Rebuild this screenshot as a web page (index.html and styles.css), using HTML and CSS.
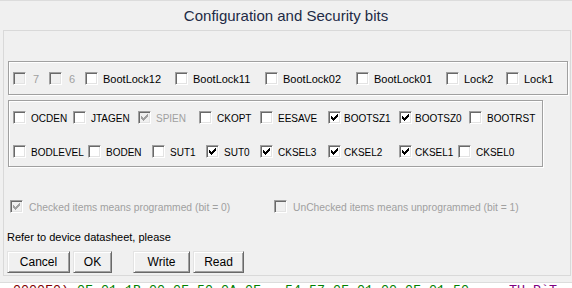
FILE: index.html
```html
<!DOCTYPE html>
<html lang="en">
<head>
    <meta charset="UTF-8">
    <meta name="viewport" content="width=device-width, initial-scale=1.0">
    <title>Configuration and Security bits</title>
    <link rel="stylesheet" href="styles.css">
</head>
<body>
    <div class="dialog">
        <h1 class="caption">Configuration and Security bits</h1>
        <div class="panel">
            <!-- Lock bits -->
            <div class="group group-lock">
                <div class="row row-lock">
                    <label class="bit off num"><span class="cb"></span><span class="name">7</span></label>
                    <label class="bit off num"><span class="cb"></span><span class="name">6</span></label>
                    <label class="bit"><span class="cb"></span><span class="name">BootLock12</span></label>
                    <label class="bit"><span class="cb"></span><span class="name">BootLock11</span></label>
                    <label class="bit"><span class="cb"></span><span class="name">BootLock02</span></label>
                    <label class="bit"><span class="cb"></span><span class="name">BootLock01</span></label>
                    <label class="bit"><span class="cb"></span><span class="name">Lock2</span></label>
                    <label class="bit"><span class="cb"></span><span class="name">Lock1</span></label>
                </div>
            </div>

            <!-- Fuse bits -->
            <div class="group group-fuse">
                <div class="row row-high">
                    <label class="bit"><span class="cb"></span><span class="name">OCDEN</span></label>
                    <label class="bit"><span class="cb"></span><span class="name">JTAGEN</span></label>
                    <label class="bit off"><span class="cb"><svg width="11" height="11" viewBox="0 0 11 11"><path d="M2 4h1v1h1v1h1v-1h1v-1h1v-1h1v-1h1v3h-1v1h-1v1h-1v1h-1v1h-1v-1h-1v-1h-1z"/></svg></span><span class="name">SPIEN</span></label>
                    <label class="bit"><span class="cb"></span><span class="name">CKOPT</span></label>
                    <label class="bit"><span class="cb"></span><span class="name">EESAVE</span></label>
                    <label class="bit tight"><span class="cb"><svg width="11" height="11" viewBox="0 0 11 11"><path d="M2 4h1v1h1v1h1v-1h1v-1h1v-1h1v-1h1v3h-1v1h-1v1h-1v1h-1v1h-1v-1h-1v-1h-1z"/></svg></span><span class="name">BOOTSZ1</span></label>
                    <label class="bit tight"><span class="cb"><svg width="11" height="11" viewBox="0 0 11 11"><path d="M2 4h1v1h1v1h1v-1h1v-1h1v-1h1v-1h1v3h-1v1h-1v1h-1v1h-1v1h-1v-1h-1v-1h-1z"/></svg></span><span class="name">BOOTSZ0</span></label>
                    <label class="bit"><span class="cb"></span><span class="name">BOOTRST</span></label>
                </div>
                <div class="row row-low">
                    <label class="bit"><span class="cb"></span><span class="name">BODLEVEL</span></label>
                    <label class="bit"><span class="cb"></span><span class="name">BODEN</span></label>
                    <label class="bit"><span class="cb"></span><span class="name">SUT1</span></label>
                    <label class="bit"><span class="cb"><svg width="11" height="11" viewBox="0 0 11 11"><path d="M2 4h1v1h1v1h1v-1h1v-1h1v-1h1v-1h1v3h-1v1h-1v1h-1v1h-1v1h-1v-1h-1v-1h-1z"/></svg></span><span class="name">SUT0</span></label>
                    <label class="bit"><span class="cb"><svg width="11" height="11" viewBox="0 0 11 11"><path d="M2 4h1v1h1v1h1v-1h1v-1h1v-1h1v-1h1v3h-1v1h-1v1h-1v1h-1v1h-1v-1h-1v-1h-1z"/></svg></span><span class="name">CKSEL3</span></label>
                    <label class="bit tight"><span class="cb"><svg width="11" height="11" viewBox="0 0 11 11"><path d="M2 4h1v1h1v1h1v-1h1v-1h1v-1h1v-1h1v3h-1v1h-1v1h-1v1h-1v1h-1v-1h-1v-1h-1z"/></svg></span><span class="name">CKSEL2</span></label>
                    <label class="bit tight"><span class="cb"><svg width="11" height="11" viewBox="0 0 11 11"><path d="M2 4h1v1h1v1h1v-1h1v-1h1v-1h1v-1h1v3h-1v1h-1v1h-1v1h-1v1h-1v-1h-1v-1h-1z"/></svg></span><span class="name">CKSEL1</span></label>
                    <label class="bit"><span class="cb"></span><span class="name">CKSEL0</span></label>
                </div>
            </div>

            <div class="legend">
                <label class="bit off wide"><span class="cb"><svg width="11" height="11" viewBox="0 0 11 11"><path d="M2 4h1v1h1v1h1v-1h1v-1h1v-1h1v-1h1v3h-1v1h-1v1h-1v1h-1v1h-1v-1h-1v-1h-1z"/></svg></span><span class="name">Checked items means programmed (bit = 0)</span></label>
                <label class="bit off wide"><span class="cb"></span><span class="name">UnChecked items means unprogrammed (bit = 1)</span></label>
            </div>

            <p class="note">Refer to device datasheet, please</p>

            <div class="buttons">
                <button class="btn btn-cancel">Cancel</button>
                <button class="btn btn-ok">OK</button>
                <button class="btn btn-write">Write</button>
                <button class="btn btn-read">Read</button>
            </div>
        </div>
        <div class="hexdump"><span class="addr">0000F0)</span> <span class="hex">0F 01 1B 00 0F 50 0A 0F   54 57 0F 01 00 0F 01 50</span>     <span class="ascii">TU.P`T~~</span></div>
    </div>
</body>
</html>
```

FILE: styles.css
```css
* {
    box-sizing: border-box;
}
body {
    margin: 0;
    width: 572px;
    height: 288px;
    overflow: hidden;
    background-color: #f0f0f0;
    font-family: "Liberation Sans", Arial, sans-serif;
    font-size: 11px;
    color: #000;
}
.dialog {
    border-top: 1px solid #dcdcdc;
}
.caption {
    margin: 0;
    height: 29px;
    line-height: 29px;
    text-align: center;
    font-size: 15px;
    font-weight: normal;
    color: #222a45;
}
.panel {
    margin-left: 3px;
    width: 568px;
    height: 246px;
    border: 1px solid #d9d9d9;
    padding: 30px 0 0 3px;
}

/* etched group boxes */
.group {
    margin-left: 1px;
    padding-left: 4px;
    border: 1px solid #a0a0a0;
    box-shadow: inset 1px 1px 0 #fff, 1px 1px 0 #fff;
}
.group-lock {
    width: 560px;
    height: 34px;
    padding-top: 10px;
}
.group-fuse {
    width: 535px;
    height: 67px;
    margin-top: 5px;
    padding-top: 10px;
    display: grid;
    align-content: start;
    row-gap: 20px;
}
.row {
    display: grid;
}
.row-lock {
    grid-template-columns: 36px 36px 90px 90px 91px 90px 60px auto;
}
.row-high {
    grid-template-columns: 60px 65px 61px 61px 68px 71px 70px auto;
    font-size: 10px;
}
.row-low {
    grid-template-columns: 75px 64px 54px 54px 68px 71px 59px auto;
    font-size: 10px;
}

/* check boxes */
.bit {
    display: flex;
    align-items: flex-start;
    gap: 5px;
    white-space: nowrap;
    line-height: 13px;
}
.bit.num {
    gap: 7px;
}
.bit.tight {
    gap: 3px;
}
.bit.wide {
    gap: 6px;
}
.bit .name {
    padding-top: 1px;
}
.bit.off {
    color: #a0a0a0;
}
.cb {
    flex: none;
    width: 13px;
    height: 13px;
    background-color: #fff;
    border: 1px solid;
    border-color: #a0a0a0 #fff #fff #a0a0a0;
    box-shadow: inset 1px 1px 0 #696969, inset -1px -1px 0 #e3e3e3;
}
.cb svg {
    display: block;
    fill: #000;
}
.bit.off .cb {
    background-color: #f0f0f0;
}
.bit.off .cb svg {
    fill: #a0a0a0;
}

.legend {
    display: grid;
    grid-template-columns: 264px auto;
    margin-top: 33px;
    padding-left: 3px;
    font-size: 10.3px;
}
.note {
    margin: 17px 0 0;
    line-height: 13px;
}

/* push buttons */
.buttons {
    display: flex;
    gap: 3px;
    margin-top: 7px;
}
.btn {
    height: 22px;
    padding: 0;
    background-color: #f0f0f0;
    border: 1px solid;
    border-color: #e3e3e3 #696969 #696969 #e3e3e3;
    box-shadow: inset 1px 1px 0 #fff, inset -1px -1px 0 #a0a0a0;
    font-family: "Liberation Sans", Arial, sans-serif;
    font-size: 12px;
    color: #000;
}
.btn-cancel {
    width: 63px;
}
.btn-ok {
    width: 39px;
}
.btn-write {
    width: 57px;
    margin-left: 18px;
}
.btn-read {
    width: 51px;
}

/* memory view peeking in below the dialog */
.hexdump {
    margin-top: 6px;
    border-top: 1px solid #dcdcdc;
    background-color: #fff;
    padding: 1px 0 0 13px;
    height: 20px;
    font-family: "Liberation Mono", "Courier New", monospace;
    font-size: 13.33px;
    line-height: 13px;
    white-space: pre;
}
.addr {
    color: #800000;
}
.hex {
    color: #008000;
}
.ascii {
    color: #800080;
}
```
